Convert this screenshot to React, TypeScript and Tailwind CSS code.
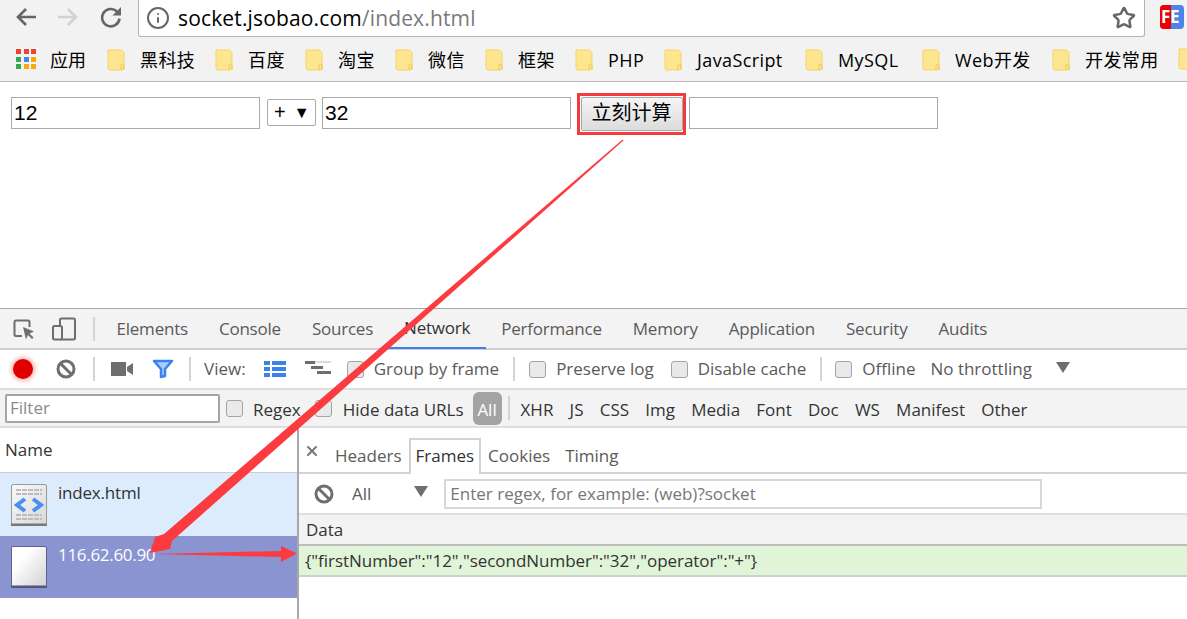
import React from 'react';
import { Info, Star, X } from 'lucide-react';

const uiFont = { fontFamily: '"Open Sans", "Noto Sans CJK SC", sans-serif' };

const bookmarks = ['黑科技', '百度', '淘宝', '微信', '框架', 'PHP', 'JavaScript', 'MySQL', 'Web开发', '开发常用'];
const bookmarkX = [107, 215, 305, 395, 485, 575, 664, 805, 922, 1052];
const tabs = ['Elements', 'Console', 'Sources', 'Network', 'Performance', 'Memory', 'Application', 'Security', 'Audits'];
const types = ['XHR', 'JS', 'CSS', 'Img', 'Media', 'Font', 'Doc', 'WS', 'Manifest', 'Other'];
const appColors = ['#ea4335', '#ea4335', '#ea4335', '#34a853', '#4285f4', '#fba905', '#34a853', '#fba905', '#fba905'];

function Folder() {
  return (
    <svg width="18" height="22" viewBox="0 0 18 22" className="shrink-0">
      <path d="M1 1h13.500L17 3.500V19a2 2 0 0 1-2 2H3a2 2 0 0 1-2-2z" fill="#fee590" stroke="#f5d469" />
      <path d="M14 21v-4.500a1.200 1.200 0 0 1 3 0V21" fill="none" stroke="#ecc850" />
    </svg>
  );
}

function Check() {
  return <span className="inline-block w-[17px] h-[17px] rounded-[3px] border border-[#a4a4a4] bg-[#e9e9e9] shrink-0" />;
}

function Block() {
  return (
    <svg width="20" height="20" viewBox="0 0 20 20">
      <circle cx="10" cy="10" r="8" fill="none" stroke="#6e6e6e" strokeWidth="3" />
      <path d="M4.500 4.500l11 11" stroke="#6e6e6e" strokeWidth="3" />
    </svg>
  );
}

function Sep() {
  return <span className="block w-[2px] h-[24px] bg-[#d4d4d4] shrink-0" />;
}

function Caret() {
  return (
    <svg width="14" height="11" viewBox="0 0 14 11" className="shrink-0">
      <path d="M0 0h14L7 11z" fill="#6e6e6e" />
    </svg>
  );
}

function Arrows() {
  return (
    <svg className="absolute left-0 top-0 pointer-events-none" width="1187" height="619" viewBox="0 0 1187 619">
      <path d="M622 140 L164 534 L155 537 L150 553 L170 549 L172 541 L624 140 Z" fill="#fb3b3f" />
      <path d="M153 554 L281 551 L281 546 L297 553.500 L281 562 L281 557 Z" fill="#fb3b3f" />
    </svg>
  );
}

function HtmlIcon() {
  return (
    <svg width="36" height="42" viewBox="0 0 36 42" className="shrink-0">
      <defs>
        <linearGradient id="htmlFill" x1="0" y1="0" x2="1" y2="1">
          <stop offset="0" stopColor="#fafafa" />
          <stop offset="1" stopColor="#d8d8d8" />
        </linearGradient>
      </defs>
      <rect x="0.500" y="0.500" width="35" height="40.500" rx="1.500" fill="url(#htmlFill)" stroke="#9a9a9a" />
      <path d="M0 39.500h36V42H0z" fill="#777" />
      <path d="M5 6h26M5 10h26M5 31h26M5 35h26" stroke="#bcbcbc" strokeWidth="2" strokeDasharray="5 1" />
      <path d="M14 15l-8 6 8 6M22 15l8 6-8 6" fill="none" stroke="#4a90f0" strokeWidth="4" />
    </svg>
  );
}

function BlankIcon() {
  return (
    <svg width="36" height="42" viewBox="0 0 36 42" className="shrink-0">
      <defs>
        <linearGradient id="blankFill" x1="0" y1="0" x2="1" y2="1">
          <stop offset="0.300" stopColor="#ffffff" />
          <stop offset="1" stopColor="#d0d0d0" />
        </linearGradient>
      </defs>
      <rect x="0.500" y="0.500" width="35" height="40.500" rx="1.500" fill="url(#blankFill)" stroke="#5c6390" />
      <path d="M0 39.500h36V42H0z" fill="#50567f" />
    </svg>
  );
}

export default function App() {
  return (
    <div className="relative w-[1187px] h-[619px] overflow-hidden bg-white text-[#222]" style={uiFont}>
      {/* browser top */}
      <div className="h-[38px] bg-[#f2f2f2] flex items-start">
        <div className="w-[138px] h-[34px] flex items-center pl-[15px] shrink-0">
          <svg width="22" height="20" viewBox="0 0 22 20">
            <path d="M21 10H3M11 2l-8 8 8 8" fill="none" stroke="#666" strokeWidth="2.600" />
          </svg>
          <svg width="22" height="20" viewBox="0 0 22 20" className="ml-[20px]">
            <path d="M1 10h18M11 2l8 8-8 8" fill="none" stroke="#d2d2d2" strokeWidth="2.600" />
          </svg>
          <svg width="22" height="22" viewBox="0 0 22 22" className="ml-[21px]">
            <path d="M17 5.500a8.700 8.700 0 1 0 2.500 7" fill="none" stroke="#666" strokeWidth="2.600" />
            <path d="M12.500 9.500H21V1z" fill="#666" />
          </svg>
        </div>
        <div className="w-[1007px] h-[37px] bg-white border-x border-b border-[#b4b4b4] rounded-b-[3px] flex items-center pl-[7px] pr-[8px] shrink-0">
          <Info size={24} strokeWidth={2} className="text-[#666]" />
          <span className="ml-[8px] text-[21px] leading-none text-black tracking-[0.15px] whitespace-nowrap">
            socket.jsobao.com<span className="text-[#7a7a7a]">/index.html</span>
          </span>
          <Star size={24} strokeWidth={2.500} className="ml-auto text-[#666]" />
        </div>
        <div className="ml-[15px] mt-[5px] w-[24px] h-[24px] rounded-[4px] overflow-hidden flex bg-[#4a86e8] relative shrink-0">
          <span className="w-[11px] bg-[#ee0000]" />
          <span className="absolute left-[1px] top-[2px] text-white text-[17px] font-bold leading-[20px] tracking-[-0.3px]">FE</span>
        </div>
      </div>

      {/* bookmarks bar */}
      <div className="relative h-[44px] bg-[#f2f2f2] border-b border-[#b9b9b9]">
        <div className="absolute left-[16px] top-[11px] grid grid-cols-3 gap-[2.500px] w-[20px]">
          {appColors.map((c, i) =>
            <span key={i} className="w-[5px] h-[5px]" style={{ background: c }} />
          )}
        </div>
        <span className="absolute left-[50px] top-[10px] text-[18px] leading-[24px] text-black">应用</span>
        {bookmarks.map((b, i) =>
          <div key={b} className="absolute top-[10px] flex items-center gap-[15px] whitespace-nowrap" style={{ left: bookmarkX[i] }}>
            <Folder />
            <span className="text-[18px] leading-[24px] text-black tracking-[0.4px]">{b}</span>
          </div>
        )}
        <div className="absolute left-[1178px] top-[10px]"><Folder /></div>
      </div>

      {/* page */}
      <div className="h-[226px] flex items-start pl-[11px] pt-[15px]" style={{ fontFamily: '"Liberation Sans", "Noto Sans CJK SC", sans-serif' }}>
        <div className="w-[249px] h-[32px] border border-[#a9a9a9] text-[21px] leading-[30px] pl-[2px] text-black">12</div>
        <div className="ml-[7px] mt-[2px] w-[49px] h-[27px] border border-[#a9a9a9] rounded-[2px] text-[20px] leading-[25px] pl-[6px] flex items-center text-black">
          <span>+</span>
          <span className="ml-[8px] text-[16px]">▼</span>
        </div>
        <div className="ml-[6px] w-[249px] h-[32px] border border-[#a9a9a9] text-[21px] leading-[30px] pl-[2px] text-black">32</div>
        <div className="ml-[6px] -mt-[4px] w-[109px] h-[42px] border-[3px] border-[#f23c3c] flex items-center justify-center">
          <div className="w-[102px] h-[34px] border border-[#a9a9a9] rounded-[2px] bg-gradient-to-b from-[#f5f5f5] to-[#dcdcdc] text-[20px] leading-[30px] text-center text-black">立刻计算</div>
        </div>
        <div className="ml-[3px] w-[249px] h-[32px] border border-[#a9a9a9]" />
      </div>

      {/* devtools */}
      <div className="h-[311px] border-t border-[#a8a8a8]">
        {/* tabs */}
        <div className="h-[41px] bg-[#f3f3f3] border-b-2 border-[#cdcdcd] flex items-center pl-[13px] text-[17px] text-[#5a5a5a]">
          <svg width="22" height="22" viewBox="0 0 22 22" className="shrink-0">
            <path d="M9 18H3a1.500 1.500 0 0 1-1.500-1.500V4A1.500 1.500 0 0 1 3 2.500h12A1.500 1.500 0 0 1 16.500 4v5" fill="none" stroke="#6e6e6e" strokeWidth="2" />
            <path d="M10 9l11 4.500-4.500 2 4 4-1.500 1.500-4-4-2 4.500z" fill="#6e6e6e" />
          </svg>
          <svg width="24" height="24" viewBox="0 0 24 24" className="ml-[17px] shrink-0">
            <rect x="8" y="1.500" width="15" height="21" rx="1.500" fill="none" stroke="#6e6e6e" strokeWidth="2" />
            <rect x="1" y="9" width="9" height="13.500" rx="1.500" fill="#f3f3f3" stroke="#6e6e6e" strokeWidth="2" />
          </svg>
          <span className="ml-[17px]"><Sep /></span>
          <div className="ml-[6px] flex h-full tracking-[-0.22px]">
            {tabs.map((t) =>
              <span key={t} className={`px-[15.500px] h-[40px] flex items-center whitespace-nowrap ${t === 'Network' ? 'border-b-2 border-[#3b82f0] text-[#333]' : ''}`}>{t}</span>
            )}
          </div>
        </div>

        {/* toolbar */}
        <div className="h-[40px] bg-white border-b-2 border-[#dedede] flex items-center pl-[13px] text-[17px] text-[#5a5a5a] whitespace-nowrap">
          <span className="w-[20px] h-[20px] rounded-full bg-[#e00000] shadow-[0_0_4px_2px_rgba(224,0,0,0.3)] shrink-0" />
          <span className="ml-[23px] flex"><Block /></span>
          <span className="ml-[17px]"><Sep /></span>
          <svg width="22" height="14" viewBox="0 0 22 14" className="ml-[16px] shrink-0">
            <path d="M0 0h15v14H0zM16 5l6-4v12l-6-4z" fill="#6e6e6e" />
          </svg>
          <svg width="22" height="20" viewBox="0 0 22 20" className="ml-[19px] shrink-0">
            <path d="M2 2h18l-7 8v7l-4 1v-8z" fill="#a9d0fb" stroke="#3b82f0" strokeWidth="2.500" strokeLinejoin="round" />
          </svg>
          <span className="ml-[15px]"><Sep /></span>
          <span className="ml-[13px]">View:</span>
          <svg width="22" height="16" viewBox="0 0 22 16" className="ml-[18px] shrink-0">
            <path d="M0 0h6v4H0zM0 6h6v4H0zM0 12h6v4H0zM8 0h14v4H8zM8 6h14v4H8zM8 12h14v4H8z" fill="#3b82f0" />
          </svg>
          <svg width="26" height="16" viewBox="0 0 26 16" className="ml-[19px] shrink-0">
            <path d="M0 0h26v2H0z" fill="#dcdcdc" />
            <path d="M0 0h10v3H0zM6 5h12v3H6zM12 10h14v3H12z" fill="#6e6e6e" />
          </svg>
          <span className="ml-[16px] flex"><Check /></span>
          <span className="ml-[10px]">Group by frame</span>
          <span className="ml-[14px]"><Sep /></span>
          <span className="ml-[14px] flex"><Check /></span>
          <span className="ml-[10px]">Preserve log</span>
          <span className="ml-[17px] flex"><Check /></span>
          <span className="ml-[10px]">Disable cache</span>
          <span className="ml-[14px]"><Sep /></span>
          <span className="ml-[13px] flex"><Check /></span>
          <span className="ml-[10px]">Offline</span>
          <span className="ml-[15px]">No throttling</span>
          <span className="ml-[24px] -mt-[4px] flex"><Caret /></span>
        </div>

        {/* filter bar */}
        <div className="h-[38px] bg-[#f3f3f3] border-b-2 border-[#dedede] flex items-center pl-[5px] text-[17px] text-[#333] whitespace-nowrap">
          <div className="w-[215px] h-[29px] bg-white border-2 border-[#a5a5a5] rounded-[2px] text-[#8a8a8a] leading-[24px] pl-[3px]">Filter</div>
          <span className="ml-[6px] flex"><Check /></span>
          <span className="ml-[10px] pt-[3px]">Regex</span>
          <span className="ml-[14px] flex"><Check /></span>
          <span className="ml-[11px] pt-[3px]">Hide data URLs</span>
          <span className="ml-[9px] w-[29px] h-[33px] bg-[#a3a3a3] rounded-[6px] text-white flex items-center justify-center pt-[3px]">All</span>
          <span className="ml-[6px]"><Sep /></span>
          <div className="ml-[11px] flex gap-[16.200px] pt-[3px]">
            {types.map((t) => <span key={t}>{t}</span>)}
          </div>
        </div>

        {/* split */}
        <div className="flex h-[191px]">
          <div className="w-[297px] shrink-0">
            <div className="h-[45px] border-b border-[#cdcdcd] flex items-center pl-[5px] text-[17px] text-[#333]">Name</div>
            <div className="h-[63px] bg-[#dcecfd] flex items-start pl-[11px] pt-[11px]">
              <HtmlIcon />
              <span className="ml-[11px] -mt-[3px] text-[17px] leading-[24px] tracking-[-0.2px] text-[#333]">index.html</span>
            </div>
            <div className="h-[62px] bg-[#8a94d0] flex items-start pl-[11px] pt-[10px]">
              <BlankIcon />
              <span className="ml-[11px] -mt-[3px] text-[17px] leading-[24px] tracking-[-0.3px] text-white">116.62.60.90</span>
            </div>
          </div>
          <div className="flex-1 border-l-2 border-[#a8a8a8] min-w-0">
            <div className="h-[46px] border-b-2 border-[#d3d3d3] flex items-end pl-[5px] text-[17px] text-[#5a5a5a]">
              <X size={16} strokeWidth={3} className="text-[#777] mb-[13px]" />
              <span className="ml-[15px] h-[35px] leading-[38px]">Headers</span>
              <span className="ml-[7px] -mb-[2px] h-[36px] leading-[32px] px-[5px] border-2 border-b-0 border-[#d3d3d3] bg-white text-[#333]">Frames</span>
              <span className="ml-[7px] h-[35px] leading-[38px]">Cookies</span>
              <span className="ml-[15px] h-[35px] leading-[38px]">Timing</span>
            </div>
            <div className="h-[41px] border-b-2 border-[#dedede] flex items-center pl-[15px] text-[17px] text-[#5a5a5a]">
              <Block />
              <span className="ml-[18px]">All</span>
              <span className="ml-[43px] -mt-[4px] flex"><Caret /></span>
              <div className="ml-[16px] w-[598px] h-[30px] border-2 border-[#d8d8d8] leading-[26px] pl-[4px] text-[#777] whitespace-nowrap">Enter regex, for example: (web)?socket</div>
            </div>
            <div className="h-[31px] bg-[#f3f3f3] border-b-2 border-[#bdbdbd] flex items-center pl-[7px] text-[17px] text-[#333]">Data</div>
            <div className="h-[31px] bg-[#e0f4d8] border-b-2 border-[#cfcfcf] flex items-center pl-[6px] text-[17px] tracking-[-0.04px] text-[#333] whitespace-nowrap">
              {'{"firstNumber":"12","secondNumber":"32","operator":"+"}'}
            </div>
          </div>
        </div>
      </div>

      <Arrows />
    </div>
  );
}
